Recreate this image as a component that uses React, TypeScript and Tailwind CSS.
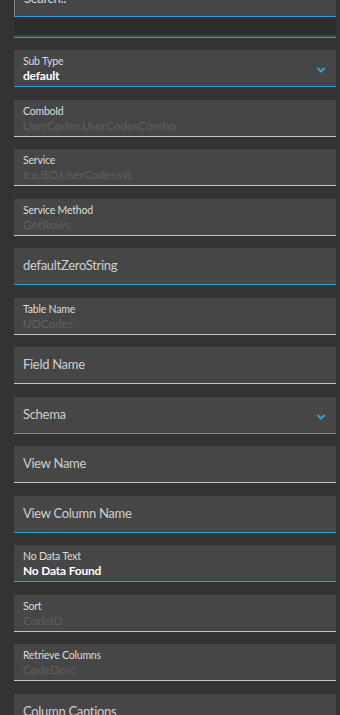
import React from "react";

type Field =
  | { kind: "labeled"; label: string; value: string; strong?: boolean; active?: boolean; select?: boolean }
  | { kind: "plain"; text: string; active?: boolean; select?: boolean };

const fields: Field[] = [
  { kind: "labeled", label: "Sub Type", value: "default", strong: true, active: true, select: true },
  { kind: "labeled", label: "ComboId", value: "UserCodes.UserCodesCombo" },
  { kind: "labeled", label: "Service", value: "Ice.BO.UserCodessvc" },
  { kind: "labeled", label: "Service Method", value: "GetRows" },
  { kind: "plain", text: "defaultZeroString", active: true },
  { kind: "labeled", label: "Table Name", value: "UDCodes" },
  { kind: "plain", text: "Field Name" },
  { kind: "plain", text: "Schema", active: true, select: true },
  { kind: "plain", text: "View Name" },
  { kind: "plain", text: "View Column Name", active: true },
  { kind: "labeled", label: "No Data Text", value: "No Data Found", strong: true, active: true },
  { kind: "labeled", label: "Sort", value: "CodeID" },
  { kind: "labeled", label: "Retrieve Columns", value: "CodeDesc" },
  { kind: "plain", text: "Column Captions" },
];

function Chevron() {
  return (
    <svg width="10" height="6" viewBox="0 0 10 6" className="absolute right-[10px] top-[17px]">
      <path d="M1.5 1 L5 4.5 L8.5 1" fill="none" stroke="#2d9fe0" strokeWidth="2" />
    </svg>
  );
}

function FieldBox({ f }: { f: Field }) {
  const border = f.active ? "border-[#2d9fe0]" : "border-[#c4c4c4]";
  return (
    <div className={`relative h-[37px] shrink-0 bg-[#464646] border-b ${border} pl-[9px]`}>
      {f.kind === "labeled" ? (
        <div className="flex flex-col pt-[5px]">
          <span className="text-[10.5px] leading-[13px] text-[#dcdcdc] tracking-[-0.2px]">{f.label}</span>
          <span
            className={
              f.strong
                ? "text-[12px] leading-[15px] text-white font-bold tracking-[-0.2px]"
                : "text-[12px] leading-[15px] text-[#5f5f5f] tracking-[-0.1px]"
            }
          >
            {f.value}
          </span>
        </div>
      ) : (
        <div className="flex h-full items-center">
          <span className="text-[13px] text-[#cfcfcf] tracking-[-0.3px]">{f.text}</span>
        </div>
      )}
      {f.select ? <Chevron /> : null}
    </div>
  );
}

export default function App() {
  return (
    <div
      className="w-[340px] h-[715px] overflow-hidden bg-[#333333]"
      style={{ fontFamily: 'Lato, "Open Sans", sans-serif' }}
    >
      <div className="flex flex-col pl-[14px] pr-[4px] mt-[-20px]">
        <div className="relative h-[36px] bg-[#464646] border-l border-[#8a8a8a] pl-[9px] flex items-end pb-[10px]">
          <span className="text-[13px] leading-[16px] text-[#d8d8d8] tracking-[-0.3px]">Search..</span>
        </div>
        <div className="h-[1px] bg-[#2d9fe0]" />
        <div className="h-[18px] bg-[#2e2e2e]" />
        <div className="h-[2px] bg-[#454545]" />
        <div className="h-[1px] bg-[#2d9fe0]" />
        <div className="h-[12px]" />
        <div className="flex flex-col gap-[12.5px]">
          {fields.map((f, i) => (
            <FieldBox key={i} f={f} />
          ))}
        </div>
      </div>
    </div>
  );
}
